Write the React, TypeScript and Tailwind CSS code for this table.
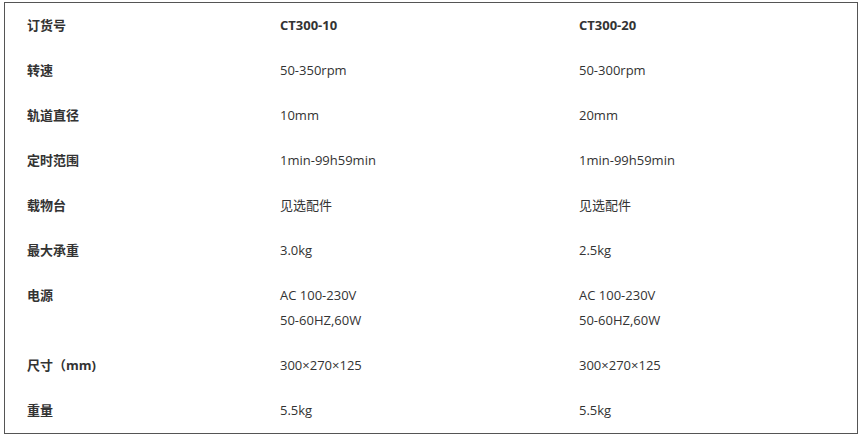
import React from "react";

const rows: { label: string; a: string[]; b: string[]; bold?: boolean }[] = [
  { label: "订货号", a: ["CT300-10"], b: ["CT300-20"], bold: true },
  { label: "转速", a: ["50-350rpm"], b: ["50-300rpm"] },
  { label: "轨道直径", a: ["10mm"], b: ["20mm"] },
  { label: "定时范围", a: ["1min-99h59min"], b: ["1min-99h59min"] },
  { label: "载物台", a: ["见选配件"], b: ["见选配件"] },
  { label: "最大承重", a: ["3.0kg"], b: ["2.5kg"] },
  { label: "电源", a: ["AC 100-230V", "50-60HZ,60W"], b: ["AC 100-230V", "50-60HZ,60W"] },
  { label: "尺寸（mm)", a: ["300×270×125"], b: ["300×270×125"] },
  { label: "重量", a: ["5.5kg"], b: ["5.5kg"] },
];

export default function App() {
  return (
    <div
      className="w-[862px] h-[438px] bg-white pt-[2px] pl-[4px]"
      style={{ fontFamily: '"Open Sans", "Noto Sans CJK SC", sans-serif' }}
    >
      <div className="w-[854px] border border-[#555555] text-[13px] leading-[25px] text-[#333333]">
        <div className="grid grid-cols-[253px_299px_1fr]">
          {rows.map((r, i) => (
            <React.Fragment key={i}>
              <div className="py-[10px] pl-[22px] font-bold">{r.label}</div>
              <div className={`py-[10px] pl-[22px] ${r.bold ? "font-bold" : ""}`}>
                {r.a.map((t, j) => (
                  <div key={j}>{t}</div>
                ))}
              </div>
              <div className={`py-[10px] pl-[22px] ${r.bold ? "font-bold" : ""}`}>
                {r.b.map((t, j) => (
                  <div key={j}>{t}</div>
                ))}
              </div>
            </React.Fragment>
          ))}
        </div>
      </div>
    </div>
  );
}
